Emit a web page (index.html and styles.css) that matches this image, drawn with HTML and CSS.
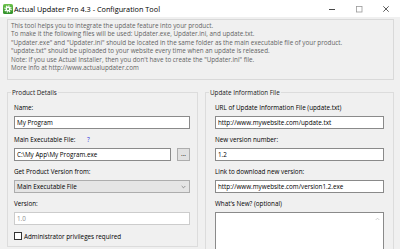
FILE: index.html
```html
<!DOCTYPE html>
<html>
<head>
<meta charset="utf-8">
<link rel="stylesheet" href="styles.css">
</head>
<body>
<div class="window">
  <div class="titlebar">
    <svg class="app-icon" viewBox="0 0 10 10">
      <defs>
        <linearGradient id="g" x1="0" y1="0" x2="0" y2="1">
          <stop offset="0" stop-color="#6cc24a"/>
          <stop offset="1" stop-color="#2f8f2a"/>
        </linearGradient>
      </defs>
      <rect x="0" y="0" width="10" height="10" rx="1.6" fill="url(#g)"/>
      <circle cx="5" cy="5" r="3" fill="none" stroke="#fff" stroke-width="1.4" stroke-dasharray="1.2 1.16"/>
      <circle cx="5" cy="5" r="2.4" fill="#fff"/>
      <circle cx="5" cy="5" r="1" fill="#3f9d35"/>
    </svg>
    <span class="title">Actual Updater Pro 4.3 - Configuration Tool</span>
    <div class="controls">
      <span class="ctl"><svg viewBox="0 0 8 8" class="ctl-icon"><line x1="1" y1="4.5" x2="7" y2="4.5" stroke="#333" stroke-width="0.9"/></svg></span>
      <span class="ctl"><svg viewBox="0 0 8 8" class="ctl-icon"><rect x="1.5" y="1.5" width="5.5" height="5.5" fill="none" stroke="#999" stroke-width="0.8"/></svg></span>
      <span class="ctl"><svg viewBox="0 0 8 8" class="ctl-icon"><path d="M1.3 1.3 L6.7 6.7 M6.7 1.3 L1.3 6.7" stroke="#333" stroke-width="0.8"/></svg></span>
    </div>
  </div>
  <div class="content">
    <div class="info">
      <p>This tool helps you to integrate the update feature into your product.</p>
      <p>To make it the following files will be used: Updater.exe, Updater.ini, and update.txt.</p>
      <p>"Updater.exe" and "Updater.ini" should be located in the same folder as the main executable file of your product.</p>
      <p>"update.txt" should be uploaded to your website every time when an update is released.</p>
      <p>Note: if you use Actual Installer, then you don't have to create the "Updater.ini" file.</p>
      <p>More info at http://www.actualupdater.com</p>
    </div>
    <div class="groups">
      <fieldset class="group group-left">
        <legend>Product Details</legend>
        <div class="group-body">
          <div class="field">
            <div class="label">Name:</div>
            <div class="textbox">My Program</div>
          </div>
          <div class="field">
            <div class="label">Main Executable File: <span class="help">?</span></div>
            <div class="row">
              <div class="textbox grow">C:\My App\My Program.exe</div>
              <div class="button">...</div>
            </div>
          </div>
          <div class="field">
            <div class="label">Get Product Version from:</div>
            <div class="combo"><span>Main Executable File</span>
              <svg class="chev" viewBox="0 0 6 4"><path d="M0.8 0.8 L3 3 L5.2 0.8" fill="none" stroke="#666" stroke-width="0.8"/></svg>
            </div>
          </div>
          <div class="field">
            <div class="label">Version:</div>
            <div class="textbox disabled">1.0</div>
          </div>
          <div class="check-row">
            <span class="checkbox"></span>
            <span>Administrator privileges required</span>
          </div>
        </div>
      </fieldset>
      <fieldset class="group group-right">
        <legend>Update Information File</legend>
        <div class="group-body">
          <div class="field">
            <div class="label">URL of Update Information File (update.txt)</div>
            <div class="textbox">http://www.mywebsite.com/update.txt</div>
          </div>
          <div class="field">
            <div class="label">New version number:</div>
            <div class="textbox">1.2</div>
          </div>
          <div class="field">
            <div class="label">Link to download new version:</div>
            <div class="textbox">http://www.mywebsite.com/version1.2.exe</div>
          </div>
          <div class="field last">
            <div class="label">What's New? (optional)</div>
            <div class="textarea">
              <div class="scroll">
                <svg class="chev-up" viewBox="0 0 6 4"><path d="M0.8 3.2 L3 1 L5.2 3.2" fill="none" stroke="#bbb" stroke-width="0.8"/></svg>
              </div>
            </div>
          </div>
        </div>
      </fieldset>
    </div>
  </div>
</div>
</body>
</html>
```

FILE: styles.css
```css
html, body {
  margin: 0;
  padding: 0;
}
body {
  width: 400px;
  height: 249px;
  overflow: hidden;
  background: #f0f0f0;
  font-family: "Open Sans", "Noto Sans", sans-serif;
  font-size: 6.3px;
  color: #000;
}
.window {
  width: 400px;
  height: 249px;
  display: flex;
  flex-direction: column;
  overflow: hidden;
}
.titlebar {
  height: 17px;
  flex: none;
  background: #fff;
  display: flex;
  align-items: center;
}
.app-icon {
  width: 10px;
  height: 10px;
  margin-left: 3px;
  flex: none;
}
.title {
  margin-left: 1px;
  font-size: 7.3px;
  color: #000;
}
.controls {
  margin-left: auto;
  display: flex;
  height: 100%;
  padding-right: 1px;
}
.ctl {
  width: 27px;
  display: flex;
  align-items: center;
  justify-content: center;
}
.ctl-icon {
  width: 8px;
  height: 8px;
}
.content {
  padding: 2px 6px 0 7px;
  flex: 1;
  min-height: 0;
}
.info {
  height: 61px;
  box-sizing: border-box;
  border: 1px solid #d9d9d9;
  background: #f0f0f0;
  padding: 1.5px 3px;
  color: #646464;
}
.info p {
  margin: 0;
  line-height: 8.6px;
  white-space: nowrap;
}
.groups {
  display: flex;
  gap: 7px;
  margin-top: 7.5px;
  align-items: flex-start;
}
.group {
  margin: 0;
  padding: 0;
  border: 1px solid #dcdcdc;
  min-width: 0;
}
.group legend {
  padding: 0 1px;
  margin-left: 3px;
  line-height: 9px;
  color: #1a1a1a;
}
.group-left {
  width: 191px;
  box-sizing: border-box;
  flex: none;
}
.group-right {
  flex: 1;
}
.group-body {
  padding: 6.5px 7px 5px 6px;
}
.group-right .group-body {
  padding: 6.5px 9px 0 9px;
}
.field {
  margin-bottom: 6px;
}
.field.last {
  margin-bottom: 0;
}
.label {
  line-height: 9px;
  margin-bottom: 4px;
  white-space: nowrap;
}
.help {
  color: #2b2bd9;
  margin-left: 10px;
}
.textbox {
  height: 13px;
  box-sizing: border-box;
  border: 1px solid #8a8a8a;
  background: #fff;
  padding: 0 2px;
  line-height: 11px;
  white-space: nowrap;
  overflow: hidden;
}
.textbox.disabled {
  border-color: #cccccc;
  color: #8d8d8d;
}
.row {
  display: flex;
  gap: 6px;
}
.grow {
  flex: 1;
}
.button {
  width: 13px;
  height: 13px;
  box-sizing: border-box;
  border: 1px solid #adadad;
  background: #e1e1e1;
  text-align: center;
  line-height: 9px;
  flex: none;
}
.combo {
  height: 13px;
  box-sizing: border-box;
  border: 1px solid #adadad;
  background: #e5e5e5;
  padding: 0 3px 0 2px;
  display: flex;
  align-items: center;
  justify-content: space-between;
}
.chev {
  width: 5px;
  height: 4px;
}
.check-row {
  display: flex;
  align-items: center;
  gap: 2px;
  height: 10px;
}
.checkbox {
  width: 8px;
  height: 8px;
  box-sizing: border-box;
  border: 1px solid #333;
  background: #fff;
}
.textarea {
  height: 38px;
  box-sizing: border-box;
  border: 1px solid #8a8a8a;
  border-bottom: none;
  background: #fff;
  display: flex;
  justify-content: flex-end;
}
.scroll {
  width: 11px;
  display: flex;
  justify-content: center;
  padding-top: 4px;
}
.chev-up {
  width: 5px;
  height: 4px;
}
```
